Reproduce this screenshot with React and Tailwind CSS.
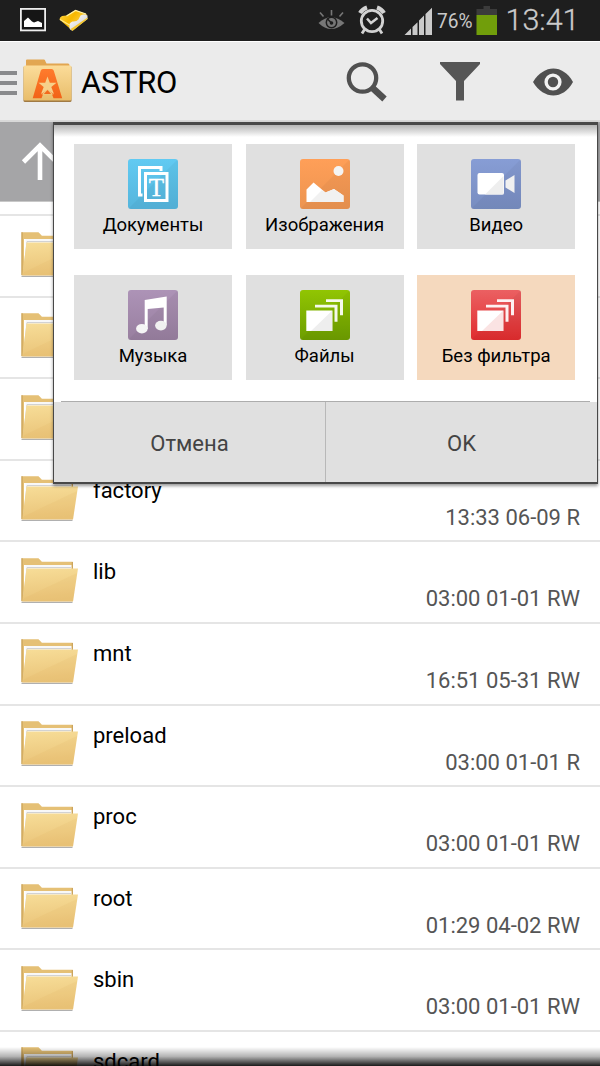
import React from "react";

const rows = [
  {},
  {},
  {},
  { name: "factory", meta: "13:33 06-09 R" },
  { name: "lib", meta: "03:00 01-01 RW" },
  { name: "mnt", meta: "16:51 05-31 RW" },
  { name: "preload", meta: "03:00 01-01 R" },
  { name: "proc", meta: "03:00 01-01 RW" },
  { name: "root", meta: "01:29 04-02 RW" },
  { name: "sbin", meta: "03:00 01-01 RW" },
  { name: "sdcard" },
];

function FolderIcon() {
  return (
    <svg className="h-[48px] w-[60px] shrink-0" viewBox="0 0 60 48">
      <defs>
        <linearGradient id="folderFront" x1="0" y1="0" x2="0.15" y2="1">
          <stop offset="0" stopColor="#f7dd98" />
          <stop offset="1" stopColor="#eac479" />
        </linearGradient>
      </defs>
      <path d="M1.500 45.300h51" stroke="#b0b0b0" strokeWidth="1.200" />
      <path d="M1.500 1.200h17l3.400 3.600h30.900V44H1.500z" fill="#e5c075" />
      <path d="M2 1.200v43M52.300 5v20" stroke="#c39a50" strokeWidth="1" />
      <path d="M4 8h47.500v14H4z" fill="#f8f8f8" />
      <path d="M4 8h1.500v20L4 39z" fill="#fff" />
      <path d="M51 10.500H7L4 38" fill="none" stroke="#d2d2d2" strokeWidth="1" />
      <path d="M6.500 11.500H58L53 44.500H2.300z" fill="url(#folderFront)" />
      <path d="M4.500 41L57 16 53 44.500H2.300z" fill="#dfaf5c" opacity=".12" />
    </svg>
  );
}

function StatusBar() {
  return (
    <div className="flex h-[42px] shrink-0 border-b border-white bg-[#1e1e1e]">
      <svg className="h-[41px] w-[600px]" viewBox="0 0 600 41">
        <defs>
          <linearGradient id="goldFolder" x1="0" y1="0" x2="1" y2="0.6">
            <stop offset="0" stopColor="#ffd84a" />
            <stop offset=".5" stopColor="#f6b800" />
            <stop offset="1" stopColor="#ffd95a" />
          </linearGradient>
          <linearGradient id="silverFlap" x1="0" y1="0" x2="1" y2="1">
            <stop offset="0" stopColor="#fff" />
            <stop offset="1" stopColor="#c9c9c9" />
          </linearGradient>
        </defs>
        <rect x="20.900" y="8.900" width="24.200" height="21.500" fill="#151515" stroke="#eee" strokeWidth="1.800" />
        <path d="M24 27V21l4-3.500 4 4 2 1 4-1.500L42 23v4z" fill="#fff" />
        <path d="M59.500 19.500q0-2.500 2.500-3.500l4.500-.5L75.500 10l11.500 4.500L71 29.500z" fill="url(#goldFolder)" />
        <path d="M66.500 16L75.500 10.500 86 14" fill="none" stroke="#fff2a8" strokeWidth="1.200" />
        <path d="M60 19.500l9.500 5.500" stroke="#ffe88a" strokeWidth="1.200" />
        <path d="M69.500 24q1-2 3-2.500 4 .500 6-2l2-4q3.500-2 7 0v3.500L72.500 30.500q-3-.5-3-3z" fill="url(#silverFlap)" />
        <path d="M70.500 29L72.500 31 87.500 19v-1.500L73 27.500z" fill="#f4c62d" />
        <g fill="none" stroke="#777" strokeWidth="1.600">
          <path d="M318.500 23Q331 11.500 344.500 23Q331 35 318.500 23z" fill="#777" stroke="none" />
          <circle cx="331.500" cy="22.500" r="5.200" stroke="#1e1e1e" strokeWidth="1.500" />
          <circle cx="331.500" cy="23" r="1.800" fill="#1e1e1e" stroke="none" />
          <path d="M327 18.500l4 4" stroke="#1e1e1e" />
          <path d="M331.500 10v5.500M320 12.500l3.500 4M343 12.500l-3.500 4" />
        </g>
        <g fill="none" stroke="#d2d2d2">
          <circle cx="372" cy="21" r="10.700" strokeWidth="2.800" />
          <path d="M360 13q2.500-4 7-5.500M384 13q-2.500-4-7-5.500" strokeWidth="4.200" />
          <path d="M364.500 29.500L362 33.500M379.500 29.500L382 33.500" strokeWidth="2.800" />
          <path d="M367 18.500l4 4.500 6.500-5" strokeWidth="2.500" />
        </g>
        <path d="M404.500 35l6.500-6.500V35zM412.500 27l5-4.800V35h-5zM419 20.600l5-5V35h-5zM425.500 14l6.500-6.300V35h-6.500z" fill="#cacaca" />
        <text x="437" y="28" textLength="35.500" lengthAdjust="spacingAndGlyphs" fill="#c9c9c9" fontFamily="Roboto, sans-serif" fontSize="20">76%</text>
        <path d="M476.500 9h7V6h6.500v3h7v6h-20.500z" fill="#3b3b3b" />
        <path d="M476.500 15H497v20h-20.500z" fill="#719e0b" />
        <text x="505.500" y="30" textLength="74" lengthAdjust="spacingAndGlyphs" fill="#cbcbcb" fontFamily="Roboto, sans-serif" fontWeight="300" fontSize="30" stroke="#cbcbcb" strokeWidth=".3">13:41</text>
      </svg>
    </div>
  );
}

function AppIcon() {
  return (
    <svg className="h-[46px] w-[52px]" viewBox="0 0 52 46">
      <defs>
        <linearGradient id="astroFolder" x1="0" y1="0" x2="0" y2="1">
          <stop offset="0" stopColor="#fbdc99" />
          <stop offset="1" stopColor="#e8bd6b" />
        </linearGradient>
        <linearGradient id="astroLetter" x1="0" y1="0" x2="0" y2="1">
          <stop offset="0" stopColor="#ff7b2d" />
          <stop offset="1" stopColor="#f26317" />
        </linearGradient>
      </defs>
      <path d="M4 9V2.500q0-1 1-1h17q1 0 1.500 2l1 2H46q1.500 0 1.500 2V10z" fill="#e2a651" />
      <rect x="1.500" y="8" width="48" height="36" rx="1.500" fill="#a07a43" />
      <rect x="1.500" y="7.500" width="48" height="35" rx="1.500" fill="url(#astroFolder)" />
      <path d="M21 11h8.500q1.800 0 2.300 1.800L40.200 40.300H31.500L29.500 35h-8l-2 5.300H10.700L18.700 12.800Q19.200 11 21 11z" fill="url(#astroLetter)" />
      <path d="M25.500 18.500l2.300 6.300h6.700l-5.200 4.300 2.700 7-6.500-4-6.500 4 2.700-7-5.200-4.300h6.700z" fill="#f6d08b" />
      <path d="M19.500 36.500L25.500 31l6 5.500z" fill="#f1c97f" />
      <path d="M21.800 36l3.700-4 3.700 4z" fill="#f36a1c" />
    </svg>
  );
}

function Header() {
  return (
    <header className="flex h-[80px] shrink-0 items-center border-b-2 border-[#d8d8d8] bg-[#ebebeb]">
      <svg className="mt-[3px] h-[26px] w-[17px]" viewBox="0 0 17 26">
        <path d="M0 3h17M0 13h17M0 23h17" stroke="#898a8c" strokeWidth="4" />
      </svg>
      <div className="ml-[5px]"><AppIcon /></div>
      <h1 className="ml-[7px] mt-[4px] w-[98px] text-[31px] leading-[40px] tracking-[-0.3px] text-black">ASTRO</h1>
      <svg className="ml-[165px] mt-[1px] h-[44px] w-[44px]" viewBox="0 0 44 44">
        <circle cx="18.500" cy="18" r="13.700" fill="none" stroke="#505050" strokeWidth="4.300" />
        <path d="M28 27.500L40.500 39" stroke="#505050" strokeWidth="6.500" strokeLinecap="butt" />
      </svg>
      <svg className="ml-[51px] h-[40px] w-[42px]" viewBox="0 0 42 40">
        <path d="M1 1h40v2L25 20v19.500h-8V20L1 3z" fill="#565656" />
      </svg>
      <svg className="ml-[51px] mt-[2px] h-[30px] w-[42px]" viewBox="0 0 42 30">
        <path d="M1 15C12-3 31-3 41 15C31 33 12 33 1 15z" fill="#505050" />
        <circle cx="21" cy="15" r="6.900" fill="#505050" stroke="#f2f2f2" strokeWidth="3.400" />
      </svg>
    </header>
  );
}

function Sheets() {
  return (
    <>
      <path d="M26 9.300h17v16h-3V12H26zM15 14.800h22.500v17h-3V17.500H15z" fill="#fff" opacity=".92" />
      <path d="M6.300 20.500h26v20.500h-26z" fill="#fff" />
    </>
  );
}

function FilesGlyph() {
  return (
    <>
      <Sheets />
      <path d="M32.300 20.500V41H11z" fill="#eee" />
    </>
  );
}

function NoFilterGlyph() {
  return (
    <>
      <Sheets />
      <path d="M32.300 20.500V41H11z" fill="#fae3e3" />
    </>
  );
}

function DocsGlyph() {
  return (
    <>
      <path d="M14.500 36H11.500V8.500H33V12" fill="none" stroke="#fff" strokeWidth="3" />
      <rect x="17.500" y="14.500" width="21.500" height="27" fill="none" stroke="#fff" strokeWidth="3" />
      <text x="28.300" y="36.500" textAnchor="middle" fontFamily="Liberation Serif, serif" fontSize="25" stroke="#fff" strokeWidth=".4" fill="#fff">T</text>
    </>
  );
}

function ImageGlyph() {
  return (
    <>
      <path d="M6.500 43V30.500L13.500 23.500l12 10L34 30l9.500 6.500V43z" fill="#fff" />
      <path d="M10 43l12-12 3.500 2.500L34 30l9.500 6.500V43z" fill="#f1f1f1" />
      <circle cx="38.500" cy="12" r="5" fill="#f4f4f4" />
    </>
  );
}

function VideoGlyph() {
  return (
    <>
      <rect x="6.500" y="14" width="26.500" height="21.500" rx="2" fill="#fff" />
      <path d="M32.500 17v18.500H14z" fill="#eee" />
      <path d="M34.500 21.500L43.500 16v18L34.500 28.500z" fill="#f0f0f0" />
    </>
  );
}

function MusicGlyph() {
  return (
    <>
      <path d="M16.700 10L38.700 6.500V35h-3V17.500L19.700 19v20h-3z" fill="#fff" />
      <ellipse cx="13.900" cy="38.700" rx="5.800" ry="4.800" fill="#f5f5f5" />
      <ellipse cx="32.900" cy="35.600" rx="5.800" ry="4.800" fill="#f0f0f0" />
    </>
  );
}

const filters = [
  { label: "Документы", top: "#61caf2", bottom: "#55b5dc", Glyph: DocsGlyph },
  { label: "Изображения", top: "#ff9f58", bottom: "#ec9450", Glyph: ImageGlyph },
  { label: "Видео", top: "#879dd5", bottom: "#788dc0", Glyph: VideoGlyph },
  { label: "Музыка", top: "#ad93b7", bottom: "#987f9f", Glyph: MusicGlyph },
  { label: "Файлы", top: "#91c502", bottom: "#6d9d00", Glyph: FilesGlyph },
  { label: "Без фильтра", top: "#eb6062", bottom: "#e02c2e", Glyph: NoFilterGlyph, active: true },
];

function FilterTile({ item, id }) {
  const { label, top, bottom, Glyph, active } = item;
  return (
    <button className={`flex h-[105px] flex-col items-center pt-[15px] ${active ? "bg-[#f5d9be]" : "bg-[#e0e0e0]"}`}>
      <svg className="h-[50px] w-[50px] shrink-0" viewBox="0 0 50 50">
        <defs>
          <linearGradient id={id} x1="0" y1="0" x2="0" y2="1">
            <stop offset="0" stopColor={top} />
            <stop offset="1" stopColor={bottom} />
          </linearGradient>
        </defs>
        <rect width="50" height="50" rx="3" fill={`url(#${id})`} />
        <path d="M50 0v47q0 3-3 3H0z" fill="#000" opacity=".035" />
        <Glyph />
      </svg>
      <span className="mt-[4px] whitespace-nowrap text-[18.500px] leading-[25px] text-black">{label}</span>
    </button>
  );
}

function FilterDialog() {
  return (
    <div className="absolute left-[53px] top-[122px] flex h-[362px] w-[545px] flex-col border-2 border-x-[1.500px] border-t-[3px] border-[#484848] bg-white shadow-[0_2px_3px_rgba(0,0,0,0.4)]">
      <div className="h-[12px] shrink-0 bg-linear-to-b from-[#b5b5b5] to-white" />
      <div className="grid grid-cols-[158px_158px_158px] gap-x-[13.600px] gap-y-[26.400px] pl-[20px] pt-[7px]">
        {filters.map((item, i) => (
          <FilterTile key={item.label} item={item} id={`tile${i}`} />
        ))}
      </div>
      <div className="mx-[7px] mt-auto h-px shrink-0 bg-[#adadad]" />
      <div className="flex h-[80px] shrink-0 bg-[#e0e0e0] text-[22px] text-[#444]">
        <button className="w-[272px] shrink-0 border-r border-[#b8b8b8] pt-[2px]">Отмена</button>
        <button className="flex-1 pt-[2px]">OK</button>
      </div>
    </div>
  );
}

export default function App() {
  return (
    <div className="relative flex h-[1066px] w-[600px] flex-col overflow-hidden bg-white font-[Roboto,sans-serif]">
      <StatusBar />
      <Header />
      <div className="h-[79px] shrink-0 bg-[#a5a5a7] pl-[21px] pt-[20px]">
        <svg className="h-[40px] w-[38px]" viewBox="0 0 38 40">
          <path d="M19 38V4M2.500 20L19 3.500 35.500 20" fill="none" stroke="#fff" strokeWidth="4.600" />
        </svg>
      </div>
      <div className="h-[13px] shrink-0 border-t border-[#c8c8c8]" />
      {rows.map((row, i) => (
        <div key={i} className="flex h-[81.600px] shrink-0 border-t-2 border-[#e5e5e5] pl-[20px] pr-[20px]">
          <div className="pt-[14.500px]"><FolderIcon /></div>
          <div className="flex flex-1 flex-col pl-[13px]">
            {row.name && <div className="mt-[16px] text-[22px] leading-[27px] text-black">{row.name}</div>}
            {row.meta && <div className="text-right text-[22px] leading-[27px] text-[#555]">{row.meta}</div>}
          </div>
        </div>
      ))}
      <FilterDialog />
      <div className="absolute bottom-0 left-0 h-[19px] w-full bg-linear-to-b from-transparent via-black/30 to-black/90" />
    </div>
  );
}
